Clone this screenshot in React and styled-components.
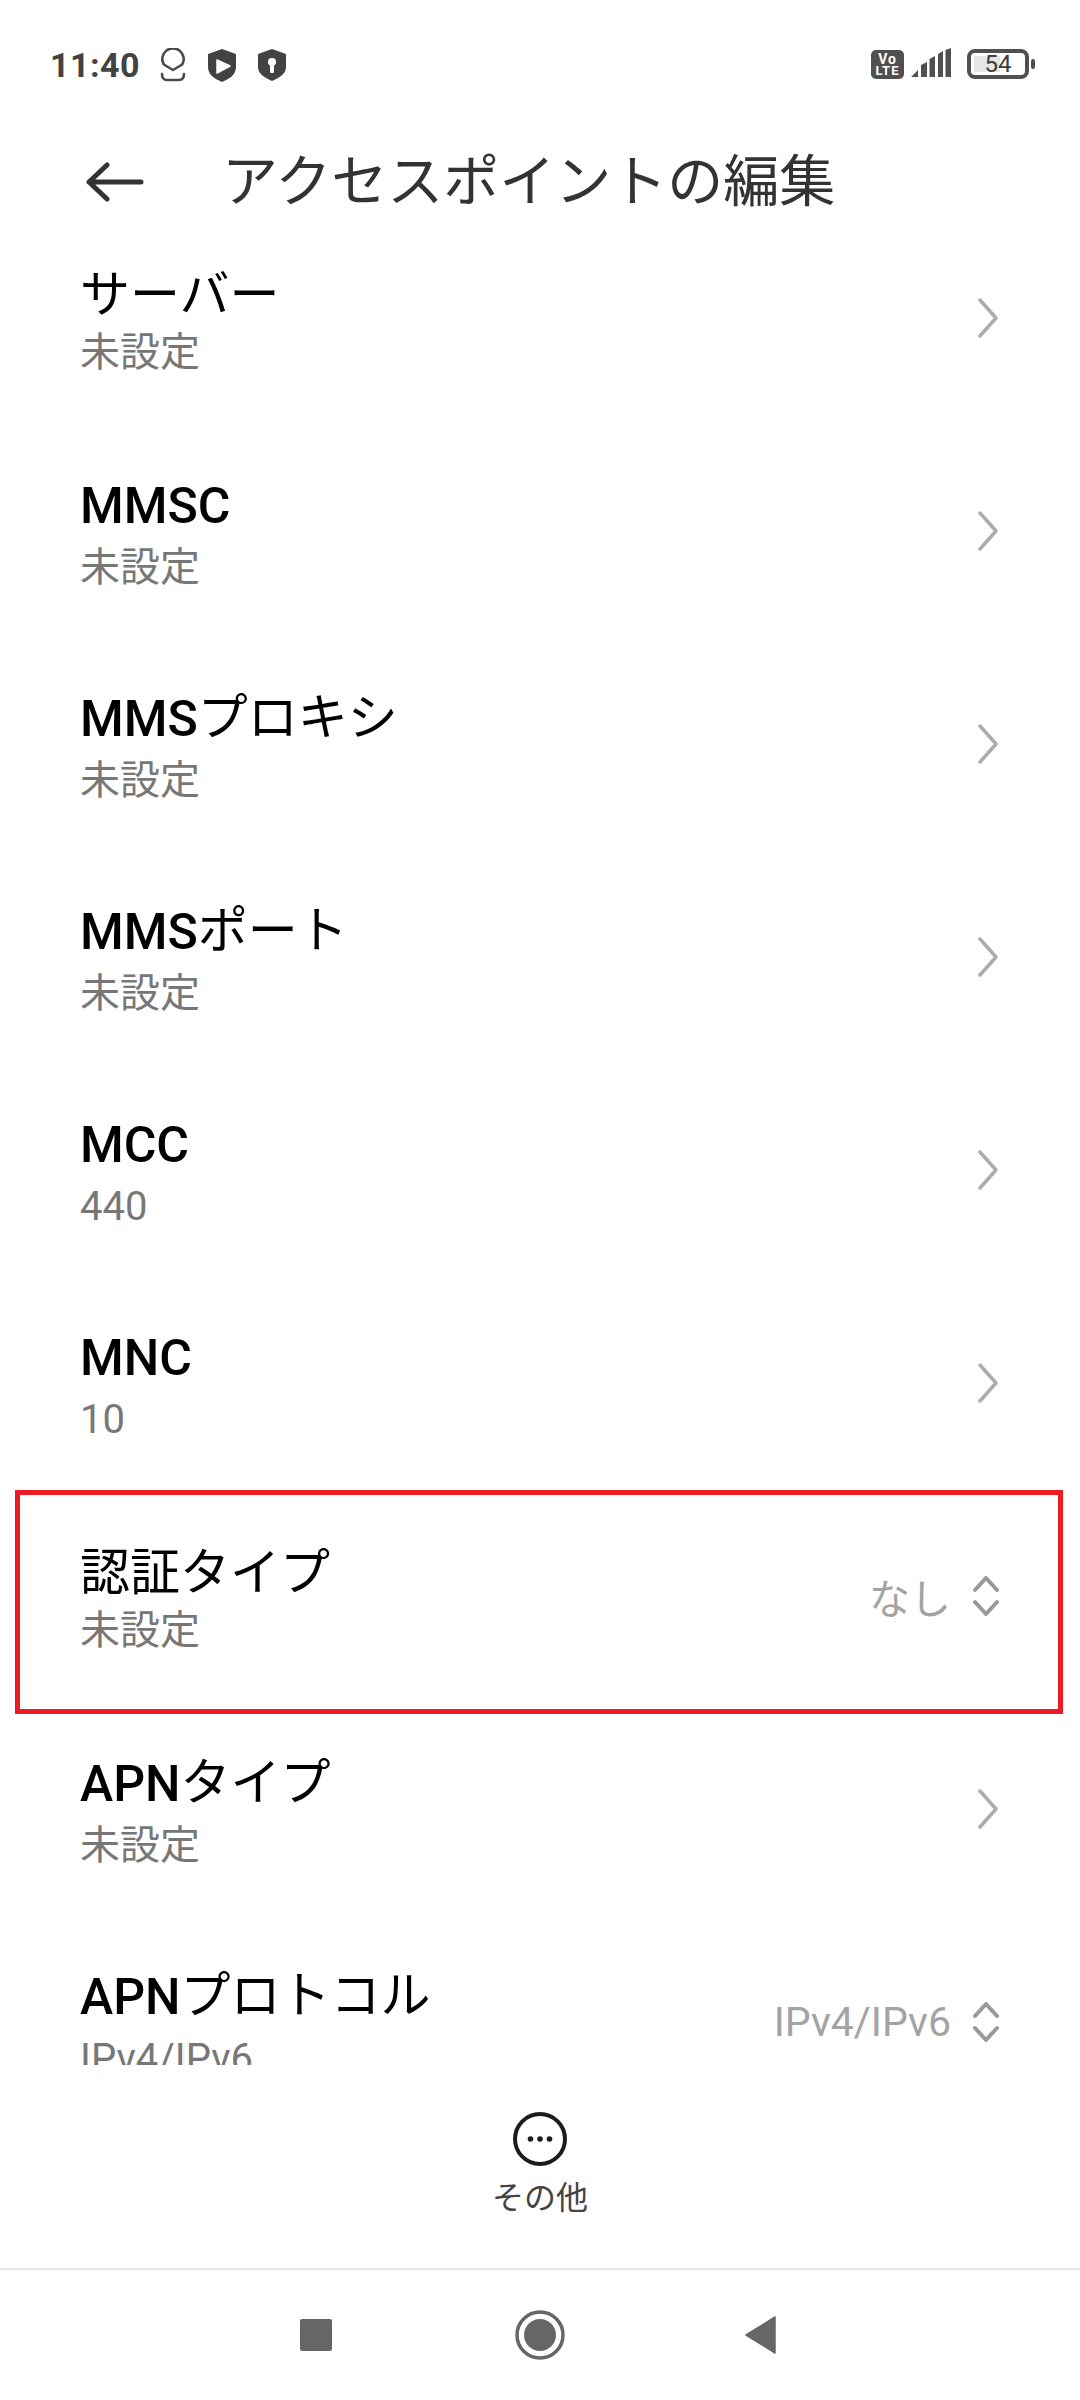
import React from "react";
import styled, { createGlobalStyle } from "styled-components";

const GlobalStyle = createGlobalStyle`
  html, body { margin: 0; padding: 0; background: #ffffff; }
  body { font-family: Roboto, "Noto Sans CJK JP", sans-serif; }
`;

const Screen = styled.div`
  width: 1080px;
  height: 2400px;
  display: flex;
  flex-direction: column;
  background: #ffffff;
  overflow: hidden;
`;

const StatusBar = styled.div`
  height: 130px;
  flex: none;
  display: flex;
  align-items: flex-start;
  padding: 48px 45px 0 50px;
  box-sizing: border-box;
`;

const Time = styled.span`
  font-size: 34px;
  line-height: 34px;
  font-weight: 700;
  color: #424242;
  width: 110px;
  letter-spacing: 0.5px;
`;

const StatusIcons = styled.div`
  display: flex;
  align-items: center;
  gap: 22px;
`;

const Spacer = styled.div`
  flex: 1;
`;

const VoBadge = styled.div`
  width: 33px;
  height: 29px;
  margin-top: 2px;
  border-radius: 5px;
  background: #505050;
  color: #ffffff;
  font-weight: 700;
  text-align: center;
  box-sizing: border-box;
  padding-top: 3px;
`;

const VoLine = styled.div`
  font-size: ${(p) => p.$size}px;
  line-height: 12px;
  letter-spacing: 1px;
`;

const SignalIcon = styled.svg`
  margin-left: 7px;
  margin-right: 16px;
  flex: none;
`;

const Battery = styled.div`
  position: relative;
  width: 62px;
  height: 30px;
  margin-top: 1px;
  margin-right: 6px;
  box-sizing: border-box;
  border: 4px solid #505050;
  border-radius: 8px;
  display: flex;
  align-items: center;
  justify-content: center;
  font-size: 24px;
  color: #3c3c3c;
  background: linear-gradient(90deg, #e6e6e6 54%, #ffffff 54%) content-box;
  padding: 3px;

  &::after {
    content: "";
    position: absolute;
    right: -10px;
    top: 6px;
    width: 4px;
    height: 10px;
    border-radius: 2px;
    background: #505050;
  }
`;

const Header = styled.div`
  height: 120px;
  flex: none;
  display: flex;
  align-items: center;
  padding: 0 0 16px 86px;
  box-sizing: border-box;
`;

const BackIcon = styled.svg`
  flex: none;
  margin-right: 78px;
`;

const HeaderTitle = styled.h1`
  margin: 0 0 12px;
  font-family: "Noto Sans CJK JP", sans-serif;
  font-size: 56px;
  font-weight: 400;
  color: #333333;
`;

const List = styled.div`
  height: 1815px;
  flex: none;
  overflow: hidden;
`;

const ListInner = styled.div`
  margin-top: -39px;
`;

const Row = styled.div`
  position: relative;
  height: 213px;
  display: flex;
  align-items: center;
  padding: 0 81px 0 80px;
  box-sizing: border-box;
`;

const RowText = styled.div`
  flex: 1;
  display: flex;
  flex-direction: column;
  padding-top: 3px;
`;

const RowTitle = styled.div`
  font-family: "Noto Sans CJK JP", sans-serif;
  font-size: 50px;
  line-height: 58px;
  font-weight: 400;
  color: #000000;
`;

const RowLatin = styled.span`
  position: relative;
  top: 1px;
  font-family: Roboto, sans-serif;
  font-size: 50px;
  font-weight: 500;
`;

const RowSub = styled.div`
  font-family: Roboto, "Noto Sans CJK JP", sans-serif;
  font-size: 40px;
  line-height: 50px;
  margin-top: 9px;
  font-weight: 400;
  color: #777777;
`;

const RowValue = styled.span`
  font-family: Roboto, "Noto Sans CJK JP", sans-serif;
  font-size: 41px;
  color: #a3a3a3;
  margin-right: 22px;
`;

const Highlight = styled.div`
  position: absolute;
  left: 15px;
  right: 17px;
  top: 1px;
  height: 224px;
  box-sizing: border-box;
  border: 5px solid #ed1c24;
  pointer-events: none;
`;

const Footer = styled.div`
  height: 205px;
  flex: none;
  display: flex;
  flex-direction: column;
  align-items: center;
  padding-top: 47px;
  box-sizing: border-box;
  border-bottom: 2px solid #e8e8e8;
`;

const FooterLabel = styled.span`
  font-family: "Noto Sans CJK JP", sans-serif;
  font-size: 32px;
  line-height: 40px;
  margin-top: 9px;
  color: #444444;
`;

const NavBar = styled.div`
  flex: 1;
  display: flex;
  justify-content: center;
  align-items: center;
`;

const NavSlot = styled.div`
  width: 224px;
  display: flex;
  justify-content: center;
`;

const NavBack = styled.svg`
  margin-right: 8px;
`;

const ChevronRight = () => (
  <svg width="22" height="40" viewBox="0 0 22 40" fill="none" stroke="#acacac" strokeWidth="3.5" strokeLinecap="round" strokeLinejoin="round">
    <path d="M3 2l16 18L3 38" />
  </svg>
);

const ChevronUpDown = () => (
  <svg width="26" height="40" viewBox="0 0 26 40" fill="none" stroke="#999999" strokeWidth="4" strokeLinecap="round" strokeLinejoin="round">
    <path d="M2 14L13 2l11 12M2 26l11 12 11-12" />
  </svg>
);

const rows = [
  { title: "サーバー", sub: "未設定" },
  { latin: "MMSC", sub: "未設定" },
  { latin: "MMS", title: "プロキシ", sub: "未設定" },
  { latin: "MMS", title: "ポート", sub: "未設定" },
  { latin: "MCC", sub: "440" },
  { latin: "MNC", sub: "10" },
  { title: "認証タイプ", sub: "未設定", value: "なし", marked: true },
  { latin: "APN", title: "タイプ", sub: "未設定" },
  { latin: "APN", title: "プロトコル", sub: "IPv4/IPv6", value: "IPv4/IPv6" },
];

export default function App() {
  return (
    <Screen>
      <GlobalStyle />
      <StatusBar>
        <Time>11:40</Time>
        <StatusIcons>
          <svg width="26" height="34" viewBox="0 0 26 34" fill="none" stroke="#4a4a4a" strokeWidth="2.6">
            <path d="M13 22L3.800 16.500a10.700 10.700 0 1 1 18.400 0z" strokeLinejoin="round" />
            <path d="M2 26c0 4 2 6 5 6h12c3 0 5-2 5-6" strokeLinecap="round" />
          </svg>
          <svg width="28" height="33" viewBox="0 0 28 33">
            <path d="M14 0l14 5v13c0 8-7 12-14 15C7 30 0 26 0 18V5z" fill="#424242" />
            <path d="M9 11l13 6-13 7z" fill="#ffffff" stroke="#ffffff" strokeWidth="1.5" strokeLinejoin="round" />
          </svg>
          <svg width="28" height="32" viewBox="0 0 28 32">
            <path d="M14 0l14 5v13c0 7-7 11-14 14C7 29 0 25 0 18V5z" fill="#424242" />
            <circle cx="14" cy="13" r="4" fill="#ffffff" />
            <rect x="12" y="14" width="4" height="10" rx="1" fill="#ffffff" />
          </svg>
        </StatusIcons>
        <Spacer />
        <VoBadge>
          <VoLine $size={14}>Vo</VoLine>
          <VoLine $size={13}>LTE</VoLine>
        </VoBadge>
        <SignalIcon width="40" height="30" viewBox="0 0 40 30" fill="#505050">
          <path d="M0 29l7-7v7zM10 17l6-3v15h-6zM18.500 11l5.500-3v21h-5.500zM27 6l5-3v26h-5zM34.500 2l5.500-2v29h-5.500z" />
        </SignalIcon>
        <Battery>54</Battery>
      </StatusBar>
      <Header>
        <BackIcon width="58" height="40" viewBox="0 0 58 40" fill="none" stroke="#333333" strokeWidth="5" strokeLinecap="round" strokeLinejoin="round">
          <path d="M21 3L3 20l18 17M3 20h52" />
        </BackIcon>
        <HeaderTitle>アクセスポイントの編集</HeaderTitle>
      </Header>
      <List>
        <ListInner>
          {rows.map((row) => (
            <Row key={(row.latin || "") + (row.title || "")}>
              <RowText>
                <RowTitle>
                  {row.latin && <RowLatin>{row.latin}</RowLatin>}
                  {row.title}
                </RowTitle>
                <RowSub>{row.sub}</RowSub>
              </RowText>
              {row.value && <RowValue>{row.value}</RowValue>}
              {row.value ? <ChevronUpDown /> : <ChevronRight />}
              {row.marked && <Highlight />}
            </Row>
          ))}
        </ListInner>
      </List>
      <Footer>
        <svg width="54" height="54" viewBox="0 0 54 54" fill="none">
          <circle cx="27" cy="27" r="25" stroke="#1c1c1c" strokeWidth="4" />
          <circle cx="17.5" cy="27" r="2.8" fill="#1c1c1c" />
          <circle cx="27" cy="27" r="2.8" fill="#1c1c1c" />
          <circle cx="36.5" cy="27" r="2.8" fill="#1c1c1c" />
        </svg>
        <FooterLabel>その他</FooterLabel>
      </Footer>
      <NavBar>
        <NavSlot>
          <svg width="32" height="32" viewBox="0 0 32 32"><rect width="32" height="32" rx="2" fill="#666666" /></svg>
        </NavSlot>
        <NavSlot>
          <svg width="50" height="50" viewBox="0 0 50 50" fill="none">
            <circle cx="25" cy="25" r="23" stroke="#666666" strokeWidth="3.5" />
            <circle cx="25" cy="25" r="16" fill="#666666" />
          </svg>
        </NavSlot>
        <NavSlot>
          <NavBack width="32" height="38" viewBox="0 0 32 38"><path d="M31 1v36L2 19z" fill="#666666" stroke="#666666" strokeWidth="1.5" strokeLinejoin="round" /></NavBack>
        </NavSlot>
      </NavBar>
    </Screen>
  );
}
